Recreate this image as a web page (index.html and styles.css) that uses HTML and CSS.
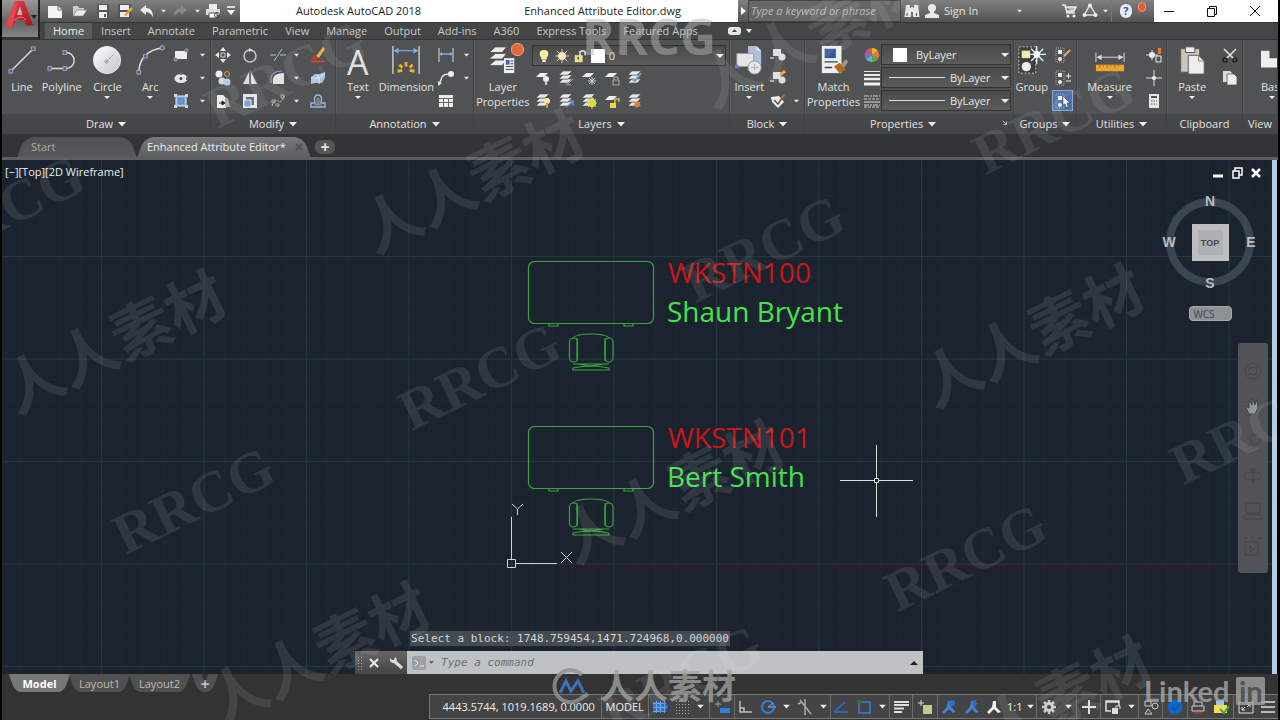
FILE: index.html
```html
<!DOCTYPE html>
<html lang="en">
<head>
<meta charset="utf-8">
<title>Autodesk AutoCAD 2018 - Enhanced Attribute Editor.dwg</title>
<link rel="stylesheet" href="styles.css">
</head>
<body>
<svg class="sprite" aria-hidden="true">
  <defs>
    <linearGradient id="ball" x1="0" y1="0" x2="1" y2="1"><stop offset="0" stop-color="#fff"/><stop offset="1" stop-color="#bfc4c9"/></linearGradient>
    <linearGradient id="redA" x1="0" y1="0" x2="1" y2="1"><stop offset="0" stop-color="#f0444a"/><stop offset="1" stop-color="#9c1119"/></linearGradient>
    <pattern id="minor" x="101" y="154" width="20.5" height="20.5" patternUnits="userSpaceOnUse"><path d="M.5 0V20.5M0 .5H20.5" stroke="#1d2731" fill="none"/></pattern>
    <pattern id="major" x="101" y="154.5" width="102.5" height="102.5" patternUnits="userSpaceOnUse"><path d="M.5 0V102.5M0 102H102.5" stroke="#243640" fill="none"/></pattern>
  </defs>
  <symbol id="dn" viewBox="0 0 8 6"><path d="M0 1H8L4 5.5Z" fill="#eee"/></symbol>
  <symbol id="logo" viewBox="0 0 36 36"><path d="M3 27L13 1H22L31 25L25 26L22 20H14L10 28Z" fill="url(#redA)"/><path d="M15 15L18 6L20.500 15Z" fill="#bbb"/><path d="M3 27L13 1L16 3L10 28Z" fill="#f2575b" opacity=".6"/><path d="M13 20Q19 14 24 20" stroke="#f77" fill="none"/><path d="M29 15h6l-3 4z" fill="#222"/></symbol>
  <symbol id="new" viewBox="0 0 16 16"><path d="M1 3H11L15 7V15H1Z" fill="#f2f2f2"/><path d="M11 3v4h4" fill="none" stroke="#777"/></symbol>
  <symbol id="open" viewBox="0 0 16 16"><path d="M1 13V3H6L7 5H12V7H5Z" fill="#ccc"/><path d="M5 7H15L11 13H1Z" fill="#eee" stroke="#777" stroke-width=".6"/></symbol>
  <symbol id="save" viewBox="0 0 16 16"><path d="M2 1H14V15H2Z" fill="#555"/><path d="M4 2h8v5H4zM4 9h8v6H4z" fill="#eee"/><path d="M9 11h2v3H9z" fill="#555"/></symbol>
  <symbol id="saveas" viewBox="0 0 16 16"><path d="M1 1H14V15H1Z" fill="#555"/><path d="M3 2h9v5H3zM3 9h9v5H3z" fill="#eee"/><path d="M7 12L14 4L16 6L9 13Z" fill="#e8a62c"/></symbol>
  <symbol id="undo" viewBox="0 0 16 16"><path d="M1 7L7 2V5Q14 5 14 14Q11 9 7 9V12Z" fill="#eee"/></symbol>
  <symbol id="redo" viewBox="0 0 16 16"><path d="M15 7L9 2V5Q2 5 2 14Q5 9 9 9V12Z" fill="#888"/></symbol>
  <symbol id="print" viewBox="0 0 16 16"><path d="M4 1h8v5H4z" fill="#eee"/><path d="M1 6H15V12H1Z" fill="#ddd"/><path d="M4 10h8v5H4z" fill="#fff" stroke="#555"/><circle cx="12" cy="12" r="2.500" fill="none" stroke="#444"/></symbol>
  <symbol id="menu" viewBox="0 0 16 16"><path d="M4 4H12" stroke="#fff" stroke-width="1.500"/><path d="M4 7h8l-4 5z" fill="#fff"/></symbol>
  <symbol id="binoc" viewBox="0 0 16 16"><path d="M2 2h4v3H7V4H9v1h1V2h4l1.500 12H9V9H7v5H.5Z" fill="#e5e5e5"/><path d="M3 10v3M12.500 10v3" stroke="#444"/></symbol>
  <symbol id="person" viewBox="0 0 16 16"><circle cx="8" cy="5" r="4" fill="#e8e8e8"/><path d="M6 8h4v2l5 2v3H1v-3l5-2Z" fill="#e8e8e8"/></symbol>
  <symbol id="cart" viewBox="0 0 16 16"><path d="M1 2H4L6 10H14M5 4H15L13 8H6" fill="#bbb" stroke="#e8e8e8" stroke-width="1.500"/><circle cx="7" cy="13" r="1.500" fill="#eee"/><circle cx="13" cy="13" r="1.500" fill="#eee"/></symbol>
  <symbol id="a360" viewBox="0 0 16 16"><path d="M8 2L14 12H2Z" fill="none" stroke="#ddd" stroke-width="1.500"/><path d="M5 10L8 5L11 10Z" fill="#777"/><circle cx="8" cy="2.500" r="2" fill="#eee"/><circle cx="2.500" cy="12" r="2" fill="#eee"/><circle cx="13.500" cy="12" r="2" fill="#eee"/></symbol>
  <symbol id="line" viewBox="0 0 32 32"><path d="M4 28L28 4" stroke="#ddd" stroke-width="1.500"/><path d="M2 26h4v4H2zM26 2h4v4h-4z" fill="#5b6078" stroke="#a6a9d8"/></symbol>
  <symbol id="pline" viewBox="0 0 32 32"><path d="M3 25H21A8 8 0 0 0 20 8H19" fill="none" stroke="#ddd" stroke-width="1.500"/><path d="M1 23h4v4H1zM17 6h4v4h-4zM17 23h4v4h-4z" fill="#5b6078" stroke="#a6a9d8"/></symbol>
  <symbol id="circle" viewBox="0 0 32 32"><circle cx="16" cy="16" r="14.500" fill="url(#ball)" stroke="#eee"/><path d="M15 18L24 9" stroke="#888" stroke-dasharray="3 1"/><path d="M14 16h3v3h-3z" fill="none" stroke="#8f9ec5"/></symbol>
  <symbol id="arc" viewBox="0 0 32 32"><path d="M4 29Q5 7 29 3" fill="none" stroke="#ddd" stroke-width="1.500"/><path d="M2 27h4v4H2zM9 10h4v4H9zM27 1h4v4h-4z" fill="#5b6078" stroke="#a6a9d8"/></symbol>
  <symbol id="rect" viewBox="0 0 16 16"><path d="M2 4H14V12H2Z" fill="#eee"/><path d="M1 11h3v3H1zM12 2h3v3h-3z" fill="#777" stroke="#aab" stroke-width=".6"/></symbol>
  <symbol id="ellipse" viewBox="0 0 16 16"><ellipse cx="8" cy="8.500" rx="6.500" ry="4.500" fill="#e4e4e4"/><circle cx="8" cy="8.500" r="1.500" fill="#445"/><path d="M7 2h2v3H7zM13 7h2v3h-2z" fill="#667"/></symbol>
  <symbol id="hatch" viewBox="0 0 16 16"><path d="M3 3h10v10H3z" fill="#7fa6d8" stroke="#dfe8f8"/><path d="M1 1h3v3H1zM12 1h3v3h-3zM1 12h3v3H1zM12 12h3v3h-3z" fill="#cfd8e8"/><path d="M5.500 5.500h5v5h-5z" fill="#6d97cc" stroke="#4f79b5" stroke-width=".5"/></symbol>
  <symbol id="move" viewBox="0 0 16 16"><path d="M8 0L11 4H5ZM8 16L5 12H11ZM0 8L4 5V11ZM16 8L12 11V5Z" fill="#e8e8e8"/><path d="M6 6h4v4H6z" fill="none" stroke="#ccc"/></symbol>
  <symbol id="rotate" viewBox="0 0 16 16"><circle cx="8" cy="9" r="6" fill="none" stroke="#ccc" stroke-width="1.500"/><path d="M7 1L10.500 3L7 5Z" fill="#ddd"/></symbol>
  <symbol id="trim" viewBox="0 0 16 16"><path d="M0 8H6M10 8H16" stroke="#8a9bb5" stroke-width="1.500"/><path d="M4 14L12 2" stroke="#bbb"/></symbol>
  <symbol id="erase" viewBox="0 0 16 16"><path d="M4 8L8 12L5 14L1 12Z" fill="#c33a20"/><path d="M6 9L13 0L15 2L9 11Z" fill="#f0ad43"/><path d="M1 14.500H15" stroke="#d34b35" stroke-width="1.500"/></symbol>
  <symbol id="copy" viewBox="0 0 16 16"><circle cx="4" cy="4" r="3.500" fill="#eee"/><circle cx="12" cy="4" r="2.500" fill="none" stroke="#dda04c"/><circle cx="7" cy="11" r="3.500" fill="#cddcec"/><circle cx="12" cy="12" r="3.500" fill="#b9cbe1"/></symbol>
  <symbol id="mirror" viewBox="0 0 16 16"><path d="M7 2V14H1ZM9 2V14H15Z" fill="#d9dde2"/><path d="M8 0V16" stroke="#777"/></symbol>
  <symbol id="fillet" viewBox="0 0 16 16"><path d="M3 14V9Q4 3 14 3V14Z" fill="#e2e2e2"/><path d="M1 13V7Q3 1 12 1" fill="none" stroke="#8da6cf"/></symbol>
  <symbol id="explode" viewBox="0 0 16 16"><path d="M1 7L5 4H10L15 2V8L12 13H5L1 14Z" fill="#a7bfde"/><path d="M1 8H9V14M9 8L15 3M7 5L10 8" fill="none" stroke="#e0e9f5"/></symbol>
  <symbol id="stretch" viewBox="0 0 16 16"><path d="M2 2H8L11 5V15H2Z" fill="#eee"/><path d="M10 5H13L15 14H10Z" fill="#aaa"/><path d="M4 10H9M7 8V12L10 10Z" stroke="#222" fill="#222"/></symbol>
  <symbol id="scale" viewBox="0 0 16 16"><path d="M1 1H15V15H1Z" fill="#dfe6f0"/><path d="M4 4H12V12H4Z" fill="#6d7078"/><path d="M2 7H9V14H2Z" fill="#7da1ce" stroke="#eee"/></symbol>
  <symbol id="array" viewBox="0 0 16 16"><path d="M2 13Q4 5 8 8T14 3" fill="none" stroke="#ccc" stroke-dasharray="2 1"/><path d="M2 7h3v3H2zM11 2h3v3h-3zM6 11h3v2H6z" fill="none" stroke="#aaa"/></symbol>
  <symbol id="offset" viewBox="0 0 16 16"><path d="M1 14V10H5Q3 2 8 2T11 10H15V14Z" fill="none" stroke="#9ab4dc" stroke-width="1.500"/><path d="M4 12H7.500Q6 5 8 5T8.500 12H12" fill="none" stroke="#bcd" stroke-width=".7"/></symbol>
  <symbol id="dim" viewBox="0 0 32 32"><path d="M2 1V31M30 1V31" stroke="#ccc" stroke-width="1.500"/><path d="M3 6H29" stroke="#6799e5" stroke-width="1.500"/><path d="M3 6L8 3V9ZM29 6L24 3V9Z" fill="#86aee6"/><path d="M7 28L12 27M9 21L12 24M16 18V23M23 21L20 24M25 28L20 27" stroke="#ecb32e" stroke-width="3"/></symbol>
  <symbol id="linear" viewBox="0 0 16 16"><path d="M1 1V15M15 1V15" stroke="#ddd"/><path d="M1 7H15" stroke="#7baeea" stroke-width="1.500"/><path d="M1 7L4 5V9ZM15 7L12 9V5Z" fill="#7baeea"/></symbol>
  <symbol id="leader" viewBox="0 0 16 16"><path d="M1 15L4 7Q6 4 11 4" fill="none" stroke="#ddd" stroke-width="1.500"/><circle cx="13" cy="4" r="3" fill="#eee"/><path d="M0 16V11L4 13Z" fill="#ddd"/></symbol>
  <symbol id="table" viewBox="0 0 16 16"><path d="M1 2H15V14H1Z" fill="#eee"/><path d="M1 5.500H15M1 9.500H15M5.500 5V14M10.500 5V14" stroke="#666"/></symbol>
  <symbol id="layers" viewBox="0 0 32 32"><g fill="#ececec" stroke="#555"><path d="M1 22L8 16H20L15 22Z"/><path d="M1 15L8 9H20L15 15Z"/><path d="M1 8L8 2H20L15 8Z"/></g><path d="M17 14H28V30H17Z" fill="#eee"/><path d="M19 16h4v5h-4z" fill="#3d68ad"/><path d="M24 17h3M24 20h3M19 23h8M19 26h8" stroke="#345"/></symbol>
  <symbol id="sheet" viewBox="0 0 16 16"><path d="M1 7L5 3H13L9 7Z" fill="#eee"/></symbol>
  <symbol id="stack" viewBox="0 0 16 16"><g fill="#e8e8e8" stroke="#555" stroke-width=".6"><path d="M1 13L5 9H14L10 13Z"/><path d="M1 9L5 5H14L10 9Z"/><path d="M1 5L5 1H14L10 5Z"/></g></symbol>
  <symbol id="bulb" viewBox="0 0 16 16"><path d="M5 10Q3 8 3 5Q3 1 8 1T13 5Q13 8 11 10V12H5Z" fill="#f8ee9e"/><path d="M6 12h4v3H6z" fill="#ddd"/></symbol>
  <symbol id="sun" viewBox="0 0 16 16"><path d="M8 0V16M0 8H16M2 2L14 14M14 2L2 14" stroke="#e8e8d8"/><circle cx="8" cy="8" r="4.500" fill="#f4ecb8"/></symbol>
  <symbol id="lock" viewBox="0 0 16 16"><path d="M8 8V4Q8 2 11 2T14 4V7" fill="none" stroke="#ddd" stroke-width="2"/><path d="M2 7H11V15H2Z" fill="#eee28b"/><path d="M6 9v3" stroke="#555" stroke-width="2"/></symbol>
  <symbol id="insert" viewBox="0 0 32 32"><path d="M15 1H24L29 6V21H15Z" fill="#aebfdd"/><path d="M24 1v5h5" fill="#dce6f5"/><path d="M3 9H21V23H3Z" fill="#e5e5e5" stroke="#999"/><circle cx="22" cy="24" r="7" fill="#e2e6ea" stroke="#999"/><path d="M18 24H26M22 20V27" stroke="#aaa"/><path d="M1 21h4v4H1z" fill="#667ec2"/></symbol>
  <symbol id="block" viewBox="0 0 16 16"><path d="M3 2H11V9H3Z" fill="#ddd"/><circle cx="12" cy="10" r="3.500" fill="#d9dee8"/><path d="M0 10h4v2H0z" fill="#aaa"/></symbol>
  <symbol id="attrib" viewBox="0 0 16 16"><path d="M1 4L9 3L14 9L8 15L2 9Z" fill="#eee"/><path d="M4 7L8 11L14 2" stroke="#595959" fill="none" stroke-width="1.500"/><path d="M11 4L14 1L15 3L12 6Z" fill="#c66b22"/></symbol>
  <symbol id="match" viewBox="0 0 32 32"><path d="M3 1H24V30H3Z" fill="#eee"/><path d="M6 4H18V14H6Z" fill="#345b98"/><path d="M6 18H20M6 24H14" stroke="#345" stroke-width="1.500"/><path d="M16 23L22 19L29 26L22 30Z" fill="#b06b21"/><path d="M23 21L29 15L31 18L27 24Z" fill="#a1968a"/></symbol>
  <symbol id="wheel" viewBox="0 0 16 16"><path d="M8 8L8 1A7 7 0 0 1 14 4Z" fill="#e1b628"/><path d="M8 8L14 4A7 7 0 0 1 14 12Z" fill="#df7542"/><path d="M8 8L14 12A7 7 0 0 1 8 15Z" fill="#55a94f"/><path d="M8 8V15A7 7 0 0 1 2 12Z" fill="#55b6bd"/><path d="M8 8L2 12A7 7 0 0 1 2 4Z" fill="#9463bc"/><path d="M8 8L2 4A7 7 0 0 1 8 1Z" fill="#d6575d"/></symbol>
  <symbol id="weights" viewBox="0 0 16 16"><path d="M0 1.500H16" stroke="#eee"/><path d="M0 5H16" stroke="#eee" stroke-width="2"/><path d="M0 9H16" stroke="#eee" stroke-width="2.500"/><path d="M0 14H16" stroke="#eee" stroke-width="3"/></symbol>
  <symbol id="types" viewBox="0 0 16 16"><path d="M0 3H16M0 12H16" stroke="#ccc" stroke-dasharray="5 1 2 1"/><path d="M0 6H16M0 14H16" stroke="#ccc" stroke-dasharray="3 1"/><path d="M0 9H16" stroke="#ddd"/></symbol>
  <symbol id="group" viewBox="0 0 32 32"><path d="M2 2H20V30H2Z" fill="#3e3e3e" stroke="#ccc" stroke-dasharray="2 2"/><path d="M5 6H14V14H5Z" fill="#eef0a0"/><circle cx="10" cy="23" r="5" fill="#eee"/><path d="M21 1V20M12 10H31M15 4L28 17M28 4L15 17" stroke="#d8f1ff" stroke-width="1.500"/><circle cx="21" cy="10" r="3.500" fill="#fff"/></symbol>
  <symbol id="grp" viewBox="0 0 16 16"><path d="M1 1H9V15H1Z" fill="none" stroke="#aaa" stroke-dasharray="1 1"/><path d="M3 3h4v4H3z" fill="#eee"/><circle cx="5" cy="12" r="2" fill="#eee"/></symbol>
  <symbol id="measure" viewBox="0 0 32 32"><path d="M1 8V18M31 8V18M2 13H30" stroke="#ddd"/><path d="M2 13L7 10V16ZM30 13L25 10V16Z" fill="#ddd"/><path d="M1 21H31V28H1Z" fill="#eba62b"/><path d="M5 21v3M9 21v2M13 21v3M17 21v2M21 21v3M25 21v2" stroke="#a56b13"/></symbol>
  <symbol id="idpt" viewBox="0 0 16 16"><path d="M8 0V16M0 8H16" stroke="#ddd"/><circle cx="8" cy="8" r="2" fill="#eee"/></symbol>
  <symbol id="calc" viewBox="0 0 16 16"><path d="M3 1H13V15H3Z" fill="#e5e5e5"/><path d="M5 3h6v2H5z" fill="#555"/><path d="M5 8h6M5 11h6" stroke="#666" stroke-dasharray="1.500 1"/></symbol>
  <symbol id="paste" viewBox="0 0 32 32"><path d="M4 4H24V29H4Z" fill="#cac6be" stroke="#655d54"/><path d="M9 2H19V8H9Z" fill="#eee" stroke="#555"/><path d="M12 11H23L29 17V31H12Z" fill="#eee" stroke="#5a5a5a"/><path d="M23 11v6h6" fill="none" stroke="#777"/></symbol>
  <symbol id="cut" viewBox="0 0 16 16"><path d="M2 2L12 12M14 2L4 12" stroke="#e5e5e5" stroke-width="1.500"/><circle cx="3" cy="13" r="2" fill="none" stroke="#222" stroke-width="1.500"/><circle cx="13" cy="13" r="2" fill="none" stroke="#222" stroke-width="1.500"/></symbol>
  <symbol id="copyclip" viewBox="0 0 16 16"><path d="M1 1H8L11 4V12H1Z" fill="#ddd"/><path d="M5 4H12L15 7V15H5Z" fill="#eee" stroke="#555" stroke-width=".8"/></symbol>
  <symbol id="base" viewBox="0 0 32 32"><path d="M0 6H9V14H28V24H0Z" fill="#eee"/></symbol>
  <symbol id="scalefig" viewBox="0 0 16 16"><path d="M7 2H10V8L15 13L12 14L8 10L3 15L1 13L6 8Z" fill="currentColor"/></symbol>
  <symbol id="gear" viewBox="0 0 16 16"><path d="M8 1V15M1 8H15M3 3L13 13M13 3L3 13" stroke="#ccc" stroke-width="2.500"/><circle cx="8" cy="8" r="5" fill="#ccc"/><circle cx="8" cy="8" r="2" fill="#444"/></symbol>
</svg>

<div class="app">
  <header class="top">
    <button class="appbtn" aria-label="Application menu"><svg><use href="#logo"/></svg></button>
    <div class="titlebar">
      <div class="qat">
        <button aria-label="New"><svg><use href="#new"/></svg></button>
        <button aria-label="Open"><svg><use href="#open"/></svg></button>
        <button aria-label="Save"><svg><use href="#save"/></svg></button>
        <button aria-label="Save as"><svg><use href="#saveas"/></svg></button>
        <button aria-label="Undo"><svg><use href="#undo"/></svg></button>
        <button class="ar" aria-label="Undo list"><svg><use href="#dn"/></svg></button>
        <button aria-label="Redo"><svg><use href="#redo"/></svg></button>
        <button class="ar" aria-label="Redo list"><svg><use href="#dn"/></svg></button>
        <button aria-label="Plot"><svg><use href="#print"/></svg></button>
        <button aria-label="Customize toolbar"><svg><use href="#menu"/></svg></button>
      </div>
      <div class="title"><span>Autodesk AutoCAD 2018</span><span>Enhanced Attribute Editor.dwg</span></div>
      <div class="info">
        <button aria-label="Collapse search"><svg viewBox="0 0 16 16"><path d="M6 4L11 8L6 12Z" fill="#fff"/></svg></button>
        <input type="text" aria-label="Search" placeholder="Type a keyword or phrase">
        <button aria-label="Find"><svg><use href="#binoc"/></svg></button>
        <button class="signin"><svg><use href="#person"/></svg>Sign In</button>
        <button class="ar" aria-label="Sign in options"><svg><use href="#dn"/></svg></button>
        <button aria-label="Store"><svg><use href="#cart"/></svg></button>
        <button aria-label="A360 services"><svg><use href="#a360"/></svg></button>
        <button class="ar" aria-label="Service options"><svg><use href="#dn"/></svg></button>
        <button class="help" aria-label="Help"><b>?</b><i></i></button>
      </div>
      <div class="winctl">
        <button aria-label="Minimize"><svg viewBox="0 0 16 16"><path d="M3 8.500H13" stroke="#111"/></svg></button>
        <button aria-label="Restore"><svg viewBox="0 0 16 16"><path d="M3.500 5.500H10.500V13.500H3.500ZM5.500 5V3.500H12.500V11.500H11" fill="none" stroke="#111"/></svg></button>
        <button aria-label="Close"><svg viewBox="0 0 16 16"><path d="M3 3L13 13M13 3L3 13" stroke="#111"/></svg></button>
      </div>
    </div>
    <nav class="tabs">
      <button class="on">Home</button><button>Insert</button><button>Annotate</button><button>Parametric</button><button>View</button><button>Manage</button><button>Output</button><button>Add-ins</button><button>A360</button><button>Express Tools</button><button>Featured Apps</button>
      <button class="fold" aria-label="Minimize ribbon"><svg viewBox="0 0 28 10"><rect x="1" y="1" width="13" height="8" rx="3" fill="#e5e5e5"/><path d="M5 6L7.500 3L10 6Z" fill="#444"/><path d="M19 3H25L22 7Z" fill="#eee"/></svg></button>
    </nav>
  </header>

  <main class="ribbon">
    <section class="panel draw"><div class="body">
      <button class="big"><svg><use href="#line"/></svg>Line</button>
      <button class="big"><svg><use href="#pline"/></svg>Polyline</button>
      <button class="big dd"><svg><use href="#circle"/></svg>Circle</button>
      <button class="big dd"><svg><use href="#arc"/></svg>Arc</button>
      <button aria-label="Rectangle"><svg><use href="#rect"/></svg></button>
      <button aria-label="Ellipse"><svg><use href="#ellipse"/></svg></button>
      <button aria-label="Hatch"><svg><use href="#hatch"/></svg></button>
      <button class="ar" aria-label="Rectangle list"><svg><use href="#dn"/></svg></button>
      <button class="ar" aria-label="Ellipse list"><svg><use href="#dn"/></svg></button>
      <button class="ar" aria-label="Hatch list"><svg><use href="#dn"/></svg></button>
    </div><h2>Draw<svg><use href="#dn"/></svg></h2></section>

    <section class="panel modify"><div class="body">
      <button aria-label="Move"><svg><use href="#move"/></svg></button>
      <button aria-label="Copy"><svg><use href="#copy"/></svg></button>
      <button aria-label="Stretch"><svg><use href="#stretch"/></svg></button>
      <button aria-label="Rotate"><svg><use href="#rotate"/></svg></button>
      <button aria-label="Mirror"><svg><use href="#mirror"/></svg></button>
      <button aria-label="Scale"><svg><use href="#scale"/></svg></button>
      <button aria-label="Trim"><svg><use href="#trim"/></svg></button>
      <button aria-label="Fillet"><svg><use href="#fillet"/></svg></button>
      <button aria-label="Array"><svg><use href="#array"/></svg></button>
      <button class="ar" aria-label="Trim list"><svg><use href="#dn"/></svg></button>
      <button class="ar" aria-label="Fillet list"><svg><use href="#dn"/></svg></button>
      <button class="ar" aria-label="Array list"><svg><use href="#dn"/></svg></button>
      <button aria-label="Erase"><svg><use href="#erase"/></svg></button>
      <button aria-label="Explode"><svg><use href="#explode"/></svg></button>
      <button aria-label="Offset"><svg><use href="#offset"/></svg></button>
    </div><h2>Modify<svg><use href="#dn"/></svg></h2></section>

    <section class="panel annot"><div class="body">
      <button class="big dd"><span class="bigA">A</span>Text</button>
      <button class="big"><svg><use href="#dim"/></svg>Dimension</button>
      <button aria-label="Linear"><svg><use href="#linear"/></svg></button>
      <button aria-label="Leader"><svg><use href="#leader"/></svg></button>
      <button aria-label="Table"><svg><use href="#table"/></svg></button>
      <button class="ar" aria-label="Linear list"><svg><use href="#dn"/></svg></button>
      <button class="ar" aria-label="Leader list"><svg><use href="#dn"/></svg></button>
    </div><h2>Annotation<svg><use href="#dn"/></svg></h2></section>

    <section class="panel layer"><div class="body">
      <button class="big alert"><svg><use href="#layers"/></svg>Layer<br>Properties</button>
      <div class="stackcol">
        <label class="combo"><svg><use href="#bulb"/></svg><svg><use href="#sun"/></svg><svg><use href="#lock"/></svg><i class="sw"></i><select aria-label="Layer"><option>0</option></select></label>
        <div class="lt">
          <button aria-label="Layer off"><svg><use href="#sheet"/><circle cx="11" cy="9" r="3" fill="#eee"/><path d="M11 11v4" stroke="#ccc" stroke-width="2"/></svg></button>
          <button aria-label="Isolate"><svg><use href="#stack"/><path d="M15 9L10 14M9 11v4h4" stroke="#9ab" fill="none"/></svg></button>
          <button aria-label="Freeze"><svg><use href="#sheet"/><path d="M11 7v8M7 11h8M8 8l6 6M14 8l-6 6" stroke="#b9d5f7"/></svg></button>
          <button aria-label="Lock"><svg><use href="#sheet"/><path d="M9 10h6v5H9zM10 10V7h4v3" fill="none" stroke="#aaa"/></svg></button>
          <button aria-label="Make current"><svg><use href="#stack"/><path d="M5 9l3 2 6-8" stroke="#739ac5" fill="none" stroke-width="2"/></svg></button>
          <button aria-label="All on"><svg><use href="#stack"/><circle cx="12" cy="8" r="3" fill="#ffe59a"/><path d="M12 10v5" stroke="#e99b28" stroke-width="2"/></svg></button>
          <button aria-label="Unisolate"><svg><use href="#stack"/><path d="M8 14L15 9M11 8h4v5" stroke="#6294dc" fill="none" stroke-width="1.500"/></svg></button>
          <button aria-label="Thaw"><svg><use href="#stack"/><circle cx="11" cy="10" r="4" fill="#e9df55"/><path d="M11 4v12M5 10h12M7 6l8 8M15 6l-8 8" stroke="#dcd346"/></svg></button>
          <button aria-label="Unlock"><svg><use href="#sheet"/><path d="M6 10h6v5H6z" fill="#efd844"/><path d="M11 10V6h4v3" fill="none" stroke="#d9c03c" stroke-width="1.500"/></svg></button>
          <button aria-label="Match layer"><svg><use href="#stack"/><path d="M7 11L11 8L14 13L9 15Z" fill="#e17a33"/></svg></button>
        </div>
      </div>
    </div><h2>Layers<svg><use href="#dn"/></svg></h2></section>

    <section class="panel block"><div class="body">
      <button class="big dd"><svg><use href="#insert"/></svg>Insert</button>
      <button aria-label="Create"><svg><use href="#block"/></svg></button>
      <button aria-label="Edit"><svg><use href="#block"/><path d="M10 5L15 1" stroke="#eca13a" stroke-width="3"/></svg></button>
      <button aria-label="Edit attributes"><svg><use href="#attrib"/></svg></button>
      <button class="ar third" aria-label="Attribute list"><svg><use href="#dn"/></svg></button>
    </div><h2>Block<svg><use href="#dn"/></svg></h2></section>

    <section class="panel props"><div class="body">
      <button class="big"><svg><use href="#match"/></svg>Match<br>Properties</button>
      <button aria-label="Color"><svg><use href="#wheel"/></svg></button>
      <button aria-label="Lineweight"><svg><use href="#weights"/></svg></button>
      <button aria-label="Linetype"><svg><use href="#types"/></svg></button>
      <label class="combo"><i class="sw"></i><select aria-label="Object color"><option>ByLayer</option></select></label>
      <label class="combo"><i class="ln"></i><select aria-label="Object lineweight"><option>ByLayer</option></select></label>
      <label class="combo"><i class="ln"></i><select aria-label="Object linetype"><option>ByLayer</option></select></label>
    </div><h2>Properties<svg><use href="#dn"/></svg><button class="launch" aria-label="Properties palette"><svg viewBox="0 0 8 8"><path d="M1 1L6 6M6 2V6H2" stroke="#ddd" fill="none"/></svg></button></h2></section>

    <section class="panel groups"><div class="body">
      <button class="big"><svg><use href="#group"/></svg>Group</button>
      <button aria-label="Group edit"><svg><use href="#grp"/><path d="M9 9L15 3" stroke="#e0b25e" stroke-width="2"/></svg></button>
      <button aria-label="Add or remove"><svg><use href="#grp"/><path d="M11 6h5M13.500 3.500v5M11 11h5" stroke="#eee"/></svg></button>
      <button class="lit" aria-label="Group selection"><svg><use href="#grp"/><path d="M8 3L15 10L12 10L13 14L11 14L10 11L8 12Z" fill="#fff" stroke="#333" stroke-width=".5"/></svg></button>
    </div><h2>Groups<svg><use href="#dn"/></svg></h2></section>

    <section class="panel utils"><div class="body">
      <button class="big dd"><svg><use href="#measure"/></svg>Measure</button>
      <button aria-label="Quick select"><svg viewBox="0 0 16 16"><path d="M0 8H12M6 3V13" stroke="#ddd"/><circle cx="6" cy="8" r="3" fill="#eee"/><path d="M12 1h3v6h-3z" fill="#e07a35"/><path d="M10 9h5v6h-5z" fill="none" stroke="#eee"/></svg></button>
      <button aria-label="ID point"><svg><use href="#idpt"/></svg></button>
      <button aria-label="Calculator"><svg><use href="#calc"/></svg></button>
    </div><h2>Utilities<svg><use href="#dn"/></svg></h2></section>

    <section class="panel clip"><div class="body">
      <button class="big dd"><svg><use href="#paste"/></svg>Paste</button>
      <button aria-label="Cut"><svg><use href="#cut"/></svg></button>
      <button aria-label="Copy clip"><svg><use href="#copyclip"/></svg></button>
    </div><h2>Clipboard</h2></section>

    <section class="panel view"><div class="body">
      <button class="big dd"><svg><use href="#base"/></svg>Base</button>
    </div><h2>View</h2></section>
  </main>

  <nav class="files">
    <button class="ftab">Start</button><button class="ftab on"><span>Enhanced Attribute Editor*</span><svg viewBox="0 0 8 8"><path d="M1 1L7 7M7 1L1 7" stroke="#555" stroke-width="2"/></svg></button><button class="fadd" aria-label="New drawing">+</button>
  </nav>

  <div class="stage">
    <div class="canvas">
      <svg class="dwg" viewBox="2 160 1270 514" preserveAspectRatio="xMidYMid slice">
        <rect x="2" y="160" width="1270" height="514" fill="url(#minor)"/>
        <rect x="2" y="160" width="1270" height="514" fill="url(#major)"/>
        <path d="M558 564.500H1272" stroke="#4a1e28"/>
        <defs><g id="desk" fill="none" stroke="#3aa33f" stroke-width="1.200">
          <rect x="528.500" y="261.500" width="125" height="62" rx="6"/>
          <path d="M549 324v2h9v-2M624 324v2h9v-2"/>
          <path d="M573 338Q576 334 591 334T609 338M577 338V361M605 338V361M573 364H609M578 364L590 366L604 364"/>
          <rect x="569.500" y="338" width="8" height="24" rx="4"/><rect x="605" y="338" width="8" height="24" rx="4"/>
          <path d="M573 370V368Q591 364 609 368V370Z"/>
        </g></defs>
        <use href="#desk"/><use href="#desk" y="165"/>
        <text class="tag" x="668" y="283">WKSTN100</text><text class="who" x="667" y="322">Shaun Bryant</text>
        <text class="tag" x="668" y="448">WKSTN101</text><text class="who" x="667" y="487">Bert Smith</text>
        <path d="M840 480.500H874M879 480.500H913M876.500 445V478M876.500 483V517M874.500 478.500h4v4h-4z" stroke="#ddd" fill="none"/>
        <path d="M511.500 517V560M515 563.500H557M507.500 559.500h8v8h-8zM512 504L517.500 509L523 504M517.500 509V515M561 552L572 563M572 552L561 563" stroke="#cdd2d6" fill="none"/>
      </svg>
      <button class="vlabel">[−][Top][2D Wireframe]</button>
      <div class="right">
        <div class="dctl">
          <button aria-label="Minimize drawing"><svg viewBox="0 0 16 16"><path d="M3 11H13" stroke="#fff" stroke-width="3"/></svg></button>
          <button aria-label="Restore drawing"><svg viewBox="0 0 16 16"><path d="M4 6H10V13H4ZM6 6V3H13V10H10" fill="none" stroke="#fff" stroke-width="1.500"/></svg></button>
          <button aria-label="Close drawing"><svg viewBox="0 0 16 16"><path d="M4 4L12 12M12 4L4 12" stroke="#fff" stroke-width="2.500"/></svg></button>
        </div>
        <svg class="cube" viewBox="0 0 100 110">
          <circle cx="50" cy="50" r="40" fill="none" stroke="#3c4650" stroke-width="8"/>
          <rect x="32" y="32" width="37" height="37" fill="#bcbec0"/><rect x="38" y="38" width="25" height="25" fill="#aeb0b3"/>
          <g class="dir"><text x="50" y="14">N</text><text x="9" y="55">W</text><text x="91" y="55">E</text><text x="50" y="96">S</text></g>
          <text class="face" x="50" y="54">TOP</text>
        </svg>
        <button class="wcs">WCS</button>
        <div class="navbar">
          <button aria-label="Wheel"><svg viewBox="0 0 20 20"><circle cx="10" cy="10" r="8"/><circle cx="10" cy="10" r="4"/><path d="M4 4L7 7M16 4L13 7M4 16L7 13M16 16L13 13"/></svg></button>
          <button aria-label="Pan"><svg viewBox="0 0 20 20"><path d="M6 18L2 10L6 12V4L9 9V2L12 9L14 3L15 11L12 18Z" fill="#92979a"/></svg></button>
          <button aria-label="Zoom"><svg viewBox="0 0 20 20"><circle cx="12" cy="8" r="5"/><path d="M8 12L3 17"/></svg></button>
          <button aria-label="Orbit"><svg viewBox="0 0 20 20"><ellipse cx="10" cy="10" rx="9" ry="4"/><path d="M10 2V18M7 5L10 2L13 5"/></svg></button>
          <button aria-label="Views"><svg viewBox="0 0 20 20"><path d="M3 2H17V12H3ZM1 15Q10 11 19 15V18H1Z"/></svg></button>
          <button aria-label="Show motion"><svg viewBox="0 0 20 20"><path d="M2 6H15V19H2ZM7 10L11 13L7 16ZM1 2H5M8 2H12M15 2H19"/></svg></button>
        </div>
      </div>
      <div class="cmd">
        <p>Select a block: 1748.759454,1471.724968,0.000000</p>
        <div class="cmdrow">
          <span class="grip"></span>
          <button aria-label="Close command line"><svg viewBox="0 0 16 16"><path d="M4 4L12 12M12 4L4 12" stroke="#eee" stroke-width="2"/></svg></button>
          <button aria-label="Customize"><svg viewBox="0 0 16 16"><path d="M6 6L14 13" stroke="#ddd" stroke-width="3"/><path d="M2 3Q1 9 8 8Q10 4 7 2L6 5L4 5Z" fill="#ddd"/></svg></button>
          <div class="field">
            <button aria-label="Recent commands"><svg viewBox="0 0 24 16"><rect x="1" y="1" width="14" height="14" rx="2" fill="#9da1a3"/><path d="M4 5L7 8L4 11M9 11H13" stroke="#eee" fill="none"/><path d="M18 6H23L20.500 9Z" fill="#666"/></svg></button>
            <input type="text" aria-label="Command" placeholder="Type a command">
            <button aria-label="History"><svg viewBox="0 0 16 16"><path d="M4 10L8 6L12 10Z" fill="#222"/></svg></button>
          </div>
        </div>
      </div>
    </div>
  </div>

  <footer class="foot">
    <nav class="layouts"><button class="on">Model</button><button>Layout1</button><button>Layout2</button><button class="plus" aria-label="New layout">+</button></nav>
    <div class="status">
      <span class="coords">4443.5744, 1019.1689, 0.0000</span>
      <button class="s">MODEL</button>
      <button class="s" aria-label="Grid"><svg viewBox="0 0 16 16"><path d="M1 3H13L16 8L13 13H1Z" fill="#276bc8"/><path d="M1 4.500H14M1 8.500H14M1 12.500H14M4.500 2V14M8.500 2V14M12.500 2V14" stroke="#5c9be8"/></svg></button>
      <button aria-label="Snap"><svg viewBox="0 0 16 16"><path d="M2 2.500H15M2 5.500H15M2 8.500H15M2 11.500H15M2 14.500H15" stroke="#aaa" stroke-dasharray="1 2"/></svg></button>
      <button class="ar" aria-label="Snap list"><svg><use href="#dn"/></svg></button>
      <button class="s" aria-label="Dynamic input"><svg viewBox="0 0 16 16"><path d="M1 5H7M4 2V8" stroke="#6aa8f0"/><path d="M6 9H16V14H6Z" fill="#2f7ee0"/></svg></button>
      <button class="s" aria-label="Ortho"><svg viewBox="0 0 16 16"><path d="M3 2V13H15M3 9H7V13" stroke="#bbb" fill="none" stroke-width="1.500"/></svg></button>
      <button aria-label="Polar"><svg viewBox="0 0 16 16"><circle cx="8" cy="8" r="6" fill="none" stroke="#2f7ee0" stroke-width="2"/><path d="M8 8H16M8 8L13 4" stroke="#6fb0ff"/></svg></button>
      <button class="ar" aria-label="Polar list"><svg><use href="#dn"/></svg></button>
      <button aria-label="Isodraft"><svg viewBox="0 0 16 16"><path d="M3 1L14 15M8 0V16M1 5L5 3" stroke="#aaa" stroke-width="1.500"/></svg></button>
      <button class="ar" aria-label="Isodraft list"><svg><use href="#dn"/></svg></button>
      <button class="s" aria-label="Tracking"><svg viewBox="0 0 16 16"><path d="M1 13L12 3M1 13H15" stroke="#2b68b8" stroke-width="2"/></svg></button>
      <button aria-label="Object snap"><svg viewBox="0 0 16 16"><path d="M4 3H14V14H3V5" stroke="#347fdc" fill="none" stroke-width="1.500"/><path d="M1 1h5v4H1z" fill="#2e6d3b"/></svg></button>
      <button class="ar" aria-label="Snap options"><svg><use href="#dn"/></svg></button>
      <button class="s" aria-label="Line weight"><svg viewBox="0 0 16 16"><path d="M1 3H16M1 6H16M1 9.500H11M1 13H9" stroke="#ddd" stroke-width="2"/></svg></button>
      <button class="s" aria-label="Cycling"><svg viewBox="0 0 16 16"><path d="M1 4H7M4 1V7" stroke="#ddd"/><path d="M6 6H15V15H6Z" fill="#c3c98b"/></svg></button>
      <button class="s blue" aria-label="Annotation visibility"><svg viewBox="0 0 16 16"><use href="#scalefig"/><circle cx="11" cy="4" r="3" fill="#2b6fc9"/></svg></button>
      <button class="blue" aria-label="Auto scale"><svg viewBox="0 0 16 16"><use href="#scalefig"/><path d="M10 1L8 6H11L9 10L14 4H11L13 1Z" fill="#2b6fc9"/></svg></button>
      <button aria-label="Annotation scale"><svg><use href="#scalefig"/></svg></button>
      <button class="ratio">1:1<svg><use href="#dn"/></svg></button>
      <button class="s" aria-label="Workspace"><svg><use href="#gear"/></svg></button>
      <button class="ar" aria-label="Workspace list"><svg><use href="#dn"/></svg></button>
      <button class="s" aria-label="Monitor"><svg viewBox="0 0 16 16"><path d="M8 1V15M1 8H15" stroke="#ddd" stroke-width="2"/></svg></button>
      <button class="s" aria-label="Lock UI"><svg viewBox="0 0 16 16"><path d="M6 12H1V2H14V7M1 3H14" stroke="#ddd" fill="none" stroke-width="1.500"/><path d="M7 9H13V15H7Z" fill="#ddd"/><path d="M11 9V7H15V10" stroke="#ddd" fill="none"/></svg></button>
      <button class="ar" aria-label="Lock list"><svg><use href="#dn"/></svg></button>
      <button class="s" aria-label="Isolate objects"><svg viewBox="0 0 16 16"><path d="M2 2H8V7H2ZM5 10L9 15H2Z" stroke="#ccc" fill="none"/><circle cx="12" cy="7" r="3" stroke="#ccc" fill="none"/></svg></button>
      <button class="s" aria-label="Hardware acceleration"><svg viewBox="0 0 16 16"><circle cx="8" cy="8" r="7.500" fill="#1265c8"/><path d="M5 9L8 11L12 5" stroke="#0b4690" fill="none"/></svg></button>
      <button class="s" aria-label="Plot status"><svg viewBox="0 0 16 16"><path d="M2 7H14V12H2ZM4 3H12V7M4 3V7" stroke="#ccc" fill="none"/><path d="M3 14H13" stroke="#8f3a34" stroke-width="2"/></svg></button>
      <button aria-label="Updates"><svg viewBox="0 0 16 16"><path d="M1 6H14V14H1Z" fill="#eee04c"/><path d="M3 1H11V6H3Z" fill="#a5c5f0"/><path d="M7 10L11 14L16 7" stroke="#45a245" fill="none" stroke-width="2"/></svg></button>
      <button class="s" aria-label="Clean screen"><svg viewBox="0 0 16 16"><path d="M1 3H15V14H1ZM4 11L7 8M12 5L9 8M9 5H12V8M4 8V11H7" stroke="#ddd" fill="none"/></svg></button>
      <button aria-label="Customization"><svg viewBox="0 0 16 16"><path d="M1 3H15M1 8H15M1 13H15" stroke="#ddd" stroke-width="1.500"/></svg></button>
    </div>
  </footer>

  <svg class="marks" viewBox="0 0 1280 720" preserveAspectRatio="xMidYMid slice" aria-hidden="true">
    <g class="rr">
      <text transform="translate(202 518) rotate(-26)">RRCG</text><text transform="translate(488 394) rotate(-26)">RRCG</text>
      <text transform="translate(772 266) rotate(-26)">RRCG</text><text transform="translate(974 575) rotate(-26)">RRCG</text>
      <text transform="translate(1260 448) rotate(-26)">RRCG</text><text transform="translate(1062 138) rotate(-26)">RRCG</text>
      <text transform="translate(294 92) rotate(-26)">RRCG</text><text transform="translate(12 226) rotate(-26)">RRCG</text>
      <text transform="translate(690 696) rotate(-26)">RRCG</text>
    </g>
    <g class="cn">
      <text transform="translate(124 362) rotate(-26)">人人素材</text><text transform="translate(482 202) rotate(-26)">人人素材</text>
      <text transform="translate(1042 356) rotate(-26)">人人素材</text><text transform="translate(682 512) rotate(-26)">人人素材</text>
      <text transform="translate(328 674) rotate(-26)">人人素材</text><text transform="translate(820 56) rotate(-26)">人人素材</text>
      <text transform="translate(1050 728) rotate(-26)">人人素材</text>
    </g>
    <text class="rrbig" x="582" y="55">RRCG</text>
    <path d="M580 699A16 16 0 1 1 582 675M580 699L588 694" fill="none" stroke="#929292" stroke-width="4" opacity=".85"/>
    <path d="M560 693L566 681L571 691L578 681L584 693" fill="none" stroke="#3972b5" stroke-width="3"/>
    <text class="cnbig" x="600" y="699">人人素材</text>
    <rect x="1236" y="677" width="29" height="28" rx="2" fill="#aaa" opacity=".75"/>
    <text class="li" x="1144" y="702">Linked</text><text class="in" x="1239" y="702">in</text>
  </svg>
</div>
</body>
</html>
```
FILE: styles.css
```css
* { box-sizing: border-box; }
body { margin: 0; background: #000; font-family: "Open Sans", "Noto Sans", sans-serif; font-size: 11px; line-height: 14px; color: #e2e2e2; }
button { border: 0; padding: 0; margin: 0; background: none; font: inherit; color: inherit; min-width: 0; display: flex; align-items: center; justify-content: center; white-space: nowrap; }
button svg { width: 16px; height: 16px; flex: none; display: block; }
.ar svg { width: 5px; height: 4px; }
.sprite { position: absolute; width: 0; height: 0; }
.app { position: relative; min-height: 100vh; margin: 0 2px; display: flex; flex-direction: column; overflow: hidden; background: #333; }

.top { display: grid; grid-template-columns: 38px minmax(0, 1fr); grid-template-rows: 22px 18px; background: #444546; }
.appbtn { grid-row: span 2; background: linear-gradient(#999, #646464 60%, #858585); border-right: 2px solid #222; border-bottom: 3px solid #333; align-items: flex-start; }
.appbtn svg { width: 36px; height: 36px; }
.titlebar { display: grid; grid-template-columns: 200fr 498fr 416fr 124fr; }
.qat, .info, .winctl { display: grid; min-width: 0; background: linear-gradient(#808080, #535353); }
.qat { grid-template-columns: 27fr 23fr 23fr 22fr 22fr 12fr 21fr 14fr 18fr 18fr; padding-left: 2px; }
.title { min-width: 0; display: flex; justify-content: space-between; align-items: center; background: #fff; color: #222; padding: 0 57px 0 56px; }
.info { grid-template-columns: 11fr 167fr 24fr 62fr 86fr 23fr 23fr 12fr 38fr; padding-right: 8px; }
.info input { min-width: 0; border: 1px solid #444; background: #666; color: #ddd; font: italic 11px "Open Sans", sans-serif; padding: 0 0 2px 2px; }
.info input::placeholder { color: #bbb; opacity: 1; }
.signin { gap: 4px; }
.info .ar:nth-child(5) { justify-content: flex-end; padding-right: 36px; }
.help { border-left: 1px solid #777; gap: 6px; padding-left: 8px; }
.help b { width: 14px; height: 14px; border-radius: 7px; background: #e9edf5; color: #2c56a4; }
.help i { width: 10px; height: 10px; border-radius: 5px; background: #df5c35; border: 1px solid #f09272; align-self: flex-start; margin-top: 2px; }
.winctl { grid-template-columns: 30fr 56fr 30fr; padding-right: 8px; background: #fff; }
.tabs { display: flex; align-items: stretch; gap: 1px; padding-left: 5px; border-top: 1px solid #333; border-bottom: 1px solid #353535; color: #c8c8c8; }
.tabs button { padding: 0 8px; }
.tabs .on { background: #5b5c5d; color: #eee; }
.tabs .fold { padding: 0 20px; }
.fold svg { width: 28px; height: 10px; }

.ribbon { display: grid; grid-template-columns: 209fr 125fr 138fr 256fr 75fr 209fr 63fr 90fr 76fr 35fr; background: #515253; }
.panel { min-width: 0; overflow: hidden; border-right: 1px solid #414141; box-shadow: inset 1px 0 #5c5c5c; }
.panel h2 { margin: 0; height: 20px; font-size: 11px; font-weight: 400; display: flex; align-items: center; justify-content: center; gap: 5px; background: linear-gradient(#474849, #434445); position: relative; }
.panel h2 svg { width: 8px; height: 6px; }
.props h2 { padding-right: 12px; }
.body { display: grid; grid-auto-flow: column; grid-template-rows: repeat(3, 23px); padding: 3px 0 2px; }
.big { grid-row: span 3; flex-direction: column; justify-content: flex-start; line-height: 15px; position: relative; padding-top: 2px; }
.big svg { width: 30px; height: 30px; margin-bottom: 4px; }
.dd::after { content: ""; margin-top: 2px; border: 3px solid transparent; border-top-color: #eee; border-bottom: 0; }
.bigA { font-size: 34px; line-height: 34px; }
.draw .body { grid-template-columns: 40fr 40fr 52fr 34fr 27fr 16fr; }
.modify .body { grid-template-columns: 25fr 29fr 28fr 8fr 35fr; }
.annot .body { grid-template-columns: 44fr 54fr 26fr 14fr; }
.layer .body { grid-template-columns: 58fr 198fr; }
.block .body { grid-template-columns: 39fr 20fr 16fr; }
.third { grid-row: 3; }
.props .body { grid-template-columns: 58fr 19fr 132fr; padding-right: 2px; }
.groups .body { grid-template-columns: 36fr 27fr; }
.utils .body { grid-template-columns: 66fr 24fr; }
.clip .body { grid-template-columns: 51fr 25fr; }
.view .body { grid-template-columns: 1fr; }
.view .big { justify-self: start; margin-left: 18px; align-items: flex-start; }
.view .dd::after { margin-left: 8px; }
.alert::before { content: ""; position: absolute; top: 0; right: 8px; width: 11px; height: 11px; border-radius: 6px; background: #e06b39; border: 1px solid #f1a27c; }
.lit { background: #4a70ae; border: 1px solid #88a7d4; width: 21px; height: 21px; place-self: center; }
.stackcol { grid-row: span 3; min-width: 0; padding-right: 3px; }
.lt { display: grid; grid-template-columns: repeat(5, 23px); grid-auto-rows: 23px; }
.combo { display: flex; align-items: center; gap: 4px; min-width: 0; height: 21px; margin-top: 1px; padding: 0 4px; border: 1px solid #333; background: linear-gradient(#4a4a4a, #5b5b5b); }
.stackcol .combo { margin: 2px 0 0; }
.combo svg { width: 14px; height: 14px; flex: none; }
.combo select { flex: 1; min-width: 0; height: 18px; padding: 0; border: 0; appearance: none; color: #e8e8e8; font: inherit; background: none; }
.combo::after { content: ""; margin-right: -3px; border: 4px solid transparent; border-top-color: #eee; border-bottom: 0; }
.sw { width: 14px; height: 14px; background: #fff; flex: none; }
.props .sw { margin: 0 5px 0 7px; }
.ln { width: 56px; height: 1px; margin: 0 1px 0 3px; background: #ddd; flex: none; }
.launch { position: absolute; right: 4px; top: 6px; }
.launch svg { width: 8px; height: 8px; }

.files { display: flex; align-items: flex-end; height: 26px; padding-left: 15px; border-bottom: 3px solid #5d5e60; background: #333435; }
.ftab { position: relative; z-index: 0; width: 120px; height: 20px; justify-content: flex-start; padding-left: 14px; color: #aaa; }
.ftab::before, .ftab::after { content: ""; position: absolute; z-index: -1; top: 0; bottom: 0; background: linear-gradient(#4f5051, #595a5b); }
.ftab::before { left: 4px; right: 20px; transform: skewX(-20deg); border-radius: 9px 0 0; }
.ftab::after { left: 20px; right: 4px; transform: skewX(20deg); border-radius: 0 9px 0 0; }
.ftab.on { width: 174px; padding-left: 10px; gap: 9px; color: #eee; }
.ftab.on::before, .ftab.on::after { background: linear-gradient(#777879, #5d5e60); }
.ftab svg { width: 8px; height: 8px; }
.fadd { width: 20px; height: 14px; margin: 0 0 3px 4px; border-radius: 6px; background: #555; font-size: 16px; font-weight: 700; }

.stage { flex: 1; min-height: 510px; display: flex; padding-right: 1px; background: #000; }
.canvas { position: relative; flex: 1; border-right: 5px solid #b4cbe2; background: #1b242e; overflow: hidden; }
.dwg { position: absolute; width: 100%; height: 100%; }
.tag, .who { font: 28px "Open Sans", "Noto Sans", sans-serif; }
.tag { fill: #c8161c; }
.who { fill: #45e24f; }
.vlabel { position: absolute; left: 3px; top: 5px; color: #eee; }
.right { position: absolute; right: 4px; top: 5px; width: 116px; display: flex; flex-direction: column; align-items: center; }
.dctl { align-self: flex-end; display: flex; gap: 3px; margin-right: 4px; }
.cube { width: 100px; height: 110px; margin-top: 11px; }
.dir { font: 700 14px "Liberation Sans", sans-serif; fill: #b9bdc0; text-anchor: middle; }
.face { font: 700 9px "Liberation Sans", sans-serif; fill: #44494f; text-anchor: middle; }
.wcs { width: 43px; height: 15px; margin-top: 4px; border: 1px solid #a5a9ac; border-radius: 4px; background: #8d9194; color: #42484e; font-size: 10px; justify-content: flex-start; padding-left: 4px; }
.navbar { align-self: flex-end; width: 30px; margin-top: 22px; padding: 12px 0; display: grid; gap: 4px; grid-auto-rows: 31px; border-radius: 3px; background: #505459; }
.navbar svg { width: 20px; height: 20px; fill: none; stroke: #41454a; stroke-width: 1; }
.cmd { position: absolute; left: 27.8%; bottom: 0; width: 44.7%; }
.cmd p { width: fit-content; margin: 0 0 5px 55px; padding: 0 1px; background: #454c51; color: #d5d5d5; font: 11px/15px "DejaVu Sans Mono", "Liberation Mono", monospace; }
.cmdrow { display: flex; height: 23px; background: linear-gradient(#666, #454545); }
.cmdrow > button { width: 22px; }
.grip { width: 6px; margin: 5px 0 3px 2px; background: radial-gradient(circle, #aaa 1px, transparent 1px) 0 0 / 3px 3px; }
.field { flex: 1; min-width: 0; display: flex; align-items: center; padding: 0 1px 0 4px; background: #bfc2c4; }
.field button:first-child svg { width: 24px; height: 16px; }
.field input { flex: 1; min-width: 0; border: 0; background: none; font: italic 11px "DejaVu Sans Mono", monospace; padding: 0 6px; }
.field input::placeholder { color: #6c7072; opacity: 1; }

.foot { background: #333; display: grid; grid-template-rows: 20px 26px; }
.layouts { display: flex; gap: 1px; padding-left: 8px; align-items: flex-start; }
.layouts button { position: relative; z-index: 0; width: 59px; height: 20px; color: #bbb; }
.layouts button::before, .layouts button::after { content: ""; position: absolute; z-index: -1; inset: 0 12px 2px 2px; background: #505050; transform: skewX(20deg); border-radius: 0 0 0 6px; }
.layouts button::after { inset: 0 2px 2px 12px; transform: skewX(-20deg); border-radius: 0 0 6px 0; }
.layouts .on { color: #fff; font-weight: 700; }
.layouts .on::before, .layouts .on::after { background: #777; }
.layouts .plus { width: 24px; font-size: 16px; font-weight: 700; margin-left: 3px; }
.status { display: grid; width: 66.54%; margin-left: auto; height: 25px; border: 1px solid #777; border-width: 1px 0 1px 1px; background: #444; grid-template-columns: 171fr 47fr 23fr 22fr 16fr 25fr 22fr 24fr 13fr 24fr 13fr 23fr 23fr 14fr 23fr 25fr 23fr 23fr 21fr 32fr 25fr 15fr 24fr 24fr 14fr 24fr 25fr 21fr 25fr 24fr 21fr; color: #eee; }
.coords { min-width: 0; align-self: center; text-align: right; padding-right: 6px; white-space: nowrap; }
.status .s { border-left: 1px solid #6c6c6c; }
.status .ar svg, .ratio svg { width: 7px; height: 5px; }
.ratio { gap: 4px; }
.blue { color: #3c83dd; }

.marks { position: absolute; left: -2px; top: 0; width: calc(100% + 4px); height: 100%; pointer-events: none; }
.rr text { font: 700 58px "Liberation Serif", serif; fill: #fff; fill-opacity: .09; text-anchor: middle; }
.cn text { font: 700 60px "Noto Sans CJK SC", sans-serif; fill: #fff; fill-opacity: .09; text-anchor: middle; }
.rrbig { font: 700 50px "Open Sans", sans-serif; fill: #b4b4b4; fill-opacity: .5; }
.cnbig { font: 700 34px "Noto Sans CJK SC", sans-serif; fill: #a2a2a2; fill-opacity: .8; }
.li, .in { font: 700 29px Lato, sans-serif; fill: #aaa; fill-opacity: .8; }
.in { fill: #444; }
```
